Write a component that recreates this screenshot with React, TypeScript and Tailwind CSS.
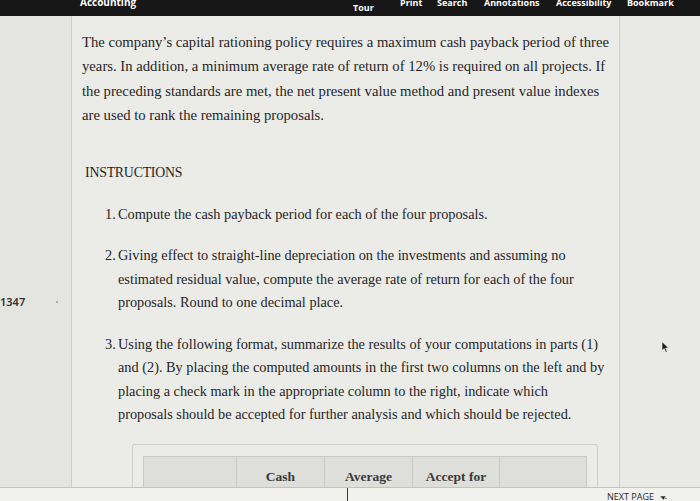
import React from 'react';

const navItems = [
  { label: 'Tour', w: 'w-[47px]', mt: 'mt-[3px]' },
  { label: 'Print', w: 'w-[37px]', mt: '-mt-[2px]' },
  { label: 'Search', w: 'w-[47px]', mt: '-mt-[2px]' },
  { label: 'Annotations', w: 'w-[72px]', mt: '-mt-[2px]' },
  { label: 'Accessibility', w: 'w-[71px]', mt: '-mt-[2px]' },
  { label: 'Bookmark', w: 'w-[60px]', mt: '-mt-[2px]' },
];

const instructions: React.ReactNode[] = [
  'Compute the cash payback period for each of the four proposals.',
  'Giving effect to straight-line depreciation on the investments and assuming no estimated residual value, compute the average rate of return for each of the four proposals. Round to one decimal place.',
  <>
    Using the following format, summarize the results of your computations in parts (1) and (2). By placing the
    computed amounts in the first two columns on the left and by placing a check mark in the appropriate column to
    the right, indicate which
    <br />
    proposals should be accepted for further analysis and which should be rejected.
  </>,
];

const columns = ['', 'Cash', 'Average', 'Accept for', ''];

function Cursor({ className }: { className?: string }) {
  return (
    <svg viewBox="0 0 10 14" className={className}>
      <path d="M1 1 L1 11 L3.5 8.8 L5.5 13 L7 12.3 L5 8.2 L8.5 8.2 Z" fill="#1c1c1c" stroke="#f2f2f2" strokeWidth="0.6" />
    </svg>
  );
}

export default function App() {
  return (
    <div className="w-[700px] h-[501px] overflow-hidden flex flex-col bg-[#e7e7e3] text-[#262626] font-['Liberation_Serif',serif]">
      {/* TOP BAR */}
      <div className="h-[16px] shrink-0 bg-[#171717] flex items-start text-white font-['Open_Sans',sans-serif] font-bold overflow-hidden">
        <span className="ml-[80px] w-[273px] shrink-0 text-[10px] leading-none -mt-[3px]">Accounting</span>
        {navItems.map((item) => (
          <span key={item.label} className={`${item.w} ${item.mt} shrink-0 text-[9px] leading-none`}>
            {item.label}
          </span>
        ))}
      </div>

      {/* BODY */}
      <div className="flex-1 min-h-0 flex">
        {/* left margin */}
        <div className="w-[72px] shrink-0 border-r border-[#cfcfca] bg-[#e4e4e0] flex flex-col">
          <div className="h-[278px]" />
          <div className="flex items-center">
            <span className="text-[11px] text-[#333] font-['Noto_Sans',sans-serif] font-semibold">1347</span>
            <span className="ml-[31px] w-[2px] h-[2px] rounded-full bg-[#9a9a96]" />
          </div>
        </div>

        {/* content */}
        <div className="w-[548px] shrink-0 border-r border-[#cfcfca] bg-[#ebebe8] flex flex-col">
          <div className="mt-[5px] ml-[8px] mr-[8px] h-px bg-[#cdcdc8]" />
          <p className="mt-[9px] pl-[10px] pr-[10px] text-[14.7px] leading-[24.4px]">
            The company’s capital rationing policy requires a maximum cash payback period of three years. In
            addition, a minimum average rate of return of 12% is required on all projects. If the preceding
            standards are met, the net present value method and present value indexes are used to rank the
            remaining proposals.
          </p>
          <h3 className="mt-[33px] pl-[13px] text-[13.8px] leading-[24px] tracking-[-0.2px]">INSTRUCTIONS</h3>
          <ol className="mt-[18px] flex flex-col gap-[18px] pl-[33px] pr-[10px]">
            {instructions.map((text, i) => (
              <li key={i} className="flex text-[14.3px] leading-[23.5px]">
                <span className="w-[13px] shrink-0">{i + 1}.</span>
                <span>{text}</span>
              </li>
            ))}
          </ol>
          <div className="mt-[17px] ml-[60px] w-[466px] border border-[#cfcfca] rounded-[3px] pt-[11px] px-[10px]">
            <div className="grid grid-cols-[92px_88px_88px_87px_88px] bg-[#dededa] border-t border-x border-[#cacac5]">
              {columns.map((c, i) => (
                <div
                  key={i}
                  className={`h-[40px] flex items-center justify-center text-[13.5px] font-bold text-[#3a3a3a] ${i > 0 ? 'border-l border-[#cacac5]' : ''}`}
                >
                  {c}
                </div>
              ))}
            </div>
          </div>
        </div>

        {/* right margin */}
        <div className="flex-1 bg-[#e9e9e5] flex flex-col">
          <div className="h-[325px]" />
          <Cursor className="ml-[41px] w-[9px] h-[12px]" />
        </div>
      </div>

      {/* FOOTER */}
      <div className="h-[14px] shrink-0 bg-[#f1f1ee] border-t border-[#c4c4bf] flex items-end">
        <div className="w-[347px] h-full" />
        <div className="w-px h-full bg-[#3a3a3a]" />
        <div className="flex-1 h-full flex items-center justify-end pr-[33px]">
          <span className="text-[9px] leading-none mt-[4px] font-['Open_Sans',sans-serif] text-[#2a2a2a]">NEXT PAGE</span>
          <Cursor className="ml-[7px] mt-[4px] w-[6px] h-[8px] -rotate-45" />
        </div>
      </div>
    </div>
  );
}
